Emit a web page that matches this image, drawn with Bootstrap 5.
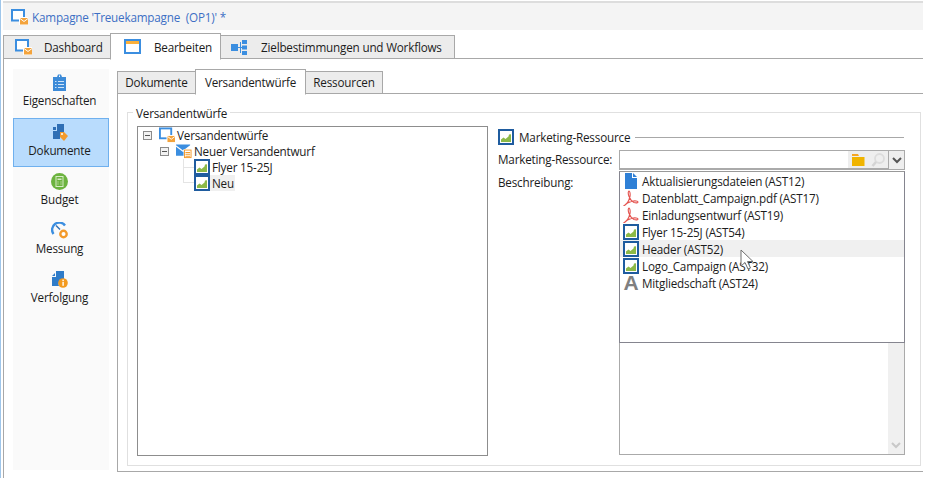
<!DOCTYPE html>
<html lang="de"><head><meta charset="utf-8"><title>Kampagne</title>
<link rel="stylesheet" href="https://cdn.jsdelivr.net/npm/bootstrap@5.3.0/dist/css/bootstrap.min.css">
<style>
html,body{height:478px;overflow:hidden;background:#fff}
body{font:11.7px/16px "Open Sans",sans-serif;color:#1c1c1c;letter-spacing:-.19px}
.shell{position:relative;width:923px;height:478px;border-left:1px solid #9fc6ea;padding:1px 0 0 2px}
.titlebar{height:29px;background:#f4f4f4;border-top:2px solid #ddd;color:#3d6fc4;padding-left:8px;gap:4px}
.outer-tabs,.inner-tabs{border-bottom:1px solid #a8a8a8;flex-wrap:nowrap;--bs-nav-tabs-border-width:0}
.outer-tabs{margin-top:3px;height:26px}
.inner-tabs{height:25px}
.tabx{display:flex;align-items:center;margin-top:auto;background:#ececec;border:1px solid #a8a8a8;border-left-width:0;color:#1c1c1c;text-decoration:none;margin-bottom:-1px}
.outer-tabs .tabx{height:24px}
.inner-tabs .tabx{height:23px;justify-content:center;padding-bottom:1px}
.tabx:first-child{border-left-width:1px}
.tabx.on{background:#fff;border-left-width:1px;border-bottom-color:#fff}
.outer-tabs .tabx.on{height:27px}
.inner-tabs .tabx.on{height:26px}
.t1{width:108px;padding-left:11px;gap:12px}
.t2{width:111px;padding-left:13px;gap:13px;margin-left:-1px}
.t3{width:234px;padding-left:10px;gap:13px}
.i1{width:79px}.i2{width:111px;margin-left:-1px}.i3{width:77px}
.mainrow{border-left:1px solid #a8a8a8;height:419px}
.sidebar{width:96px;margin:10px 0 0 9px;background:#fafafa;height:401px}
.sideitem{height:49px;display:flex;flex-direction:column;align-items:center;color:#1c1c1c;text-decoration:none;padding:5px 3px 0 0;gap:1px;border:1px solid transparent}
.sideitem:first-child{padding-top:4px}
.sideitem.on{background:#b9dcfd;border-color:#6fb0ee}
.sideitem svg{width:17px;height:17px}
.contentcol{width:806px;margin:10px 0 0 8px}
.panebox{border-left:1px solid #a8a8a8;border-bottom:1px solid #a8a8a8;height:378px;padding:11px 2px 0 9px}
.groupbox{border:1px solid #e0e0e0;height:361px;margin:0;padding:0 15px 0 9px}
.groupbox legend{float:none;width:auto;font:inherit;margin:0 0 0 -4px;padding:1px 3px 0;line-height:14px}
.treebox{width:351px;height:330px;border:1px solid #8d8d8d;position:relative;flex:none;margin-top:6px}
.trow{height:16px;display:flex;align-items:center;white-space:nowrap}
.trow svg{width:16px;height:16px;flex:none}
.r1{padding-left:5px}.r2{padding-left:22px}.r3{padding-left:56px}
.tog{width:9px;height:9px;border:1px solid #8b8b8b;background:#f2f2f2;position:relative;margin-right:7px;flex:none}
.tog::after{content:"";position:absolute;left:1px;right:1px;top:3px;height:1px;background:#555}
.lbl{margin-left:2px;padding:0 2px 0 0}
.neu{background:#f0f0f0;width:25px;margin-left:0;padding-left:2px}
.conn1{position:absolute;left:45px;top:32px;width:11px;height:24px;border-left:1px solid #e4e4e4;border-bottom:1px solid #e4e4e4}
.conn2{position:absolute;left:45px;top:40px;width:11px;height:1px;background:#e4e4e4}
.rightcol{margin:-1px 0 0 10px;width:407px}
.sect{height:16px;margin-top:10px;gap:5px}
.sect svg{width:16px;height:16px;flex:none}
.secttext{white-space:nowrap;flex:none}
.rule{height:1px;background:#a8a8a8;flex:1 1 auto;margin-right:1px}
.formrow{display:grid;grid-template-columns:121px 286px;margin-top:5px}
.fl1{height:22px;display:flex;align-items:center;padding-bottom:5px;white-space:nowrap}
.fl2{padding-top:2px}
.picker{height:20px;border:1px solid #aaa;border-bottom-width:2px;display:flex;justify-content:flex-end}
.pk{width:20px;background:#eee;display:flex;align-items:center;justify-content:center}
.pk svg{width:16px;height:16px}
.pkd{width:17px;border:1px solid #aaa;margin:-1px -1px -2px 0;height:20px;background:#eee}
.droplist{height:172px;border:1px solid #85858f;border-top-color:#999;margin-top:1px;padding:0;list-style:none;margin-bottom:0;background:#fff}
.droplist li{height:17px;display:flex;align-items:center;padding-left:3px;gap:3px;white-space:nowrap}
.droplist li svg{width:16px;height:16px;flex:none}
.droplist li.hov{background:#f0f0f0}
.aglyph{width:16px;flex:none;text-align:center;font:700 21px/16px "Liberation Sans",sans-serif;color:#808080;letter-spacing:0}
.descbox{height:112px;border:1px solid #aaa;border-top:0;display:flex;justify-content:flex-end}
.sb{width:16px;background:#f0f0f0;display:flex;align-items:flex-end;justify-content:center;padding-bottom:5px}
.sb svg{width:10px;height:7px}
.cursor{position:absolute;left:739px;top:249px;width:14px;height:22px}
</style></head>
<body>
<svg width="0" height="0" class="position-absolute">
<symbol id="img" viewBox="0 0 16 16"><rect x="1" y="1" width="14" height="14" fill="#fff" stroke="#1f5c9f" stroke-width="2"/><path d="M3 13v-2.500l2.500-2 2 1.500 3-2.500.5-2 2-.2V13z" fill="#8cb947"/></symbol>
<symbol id="camp" viewBox="0 0 17 16"><rect x="1" y="1" width="12" height="10.500" fill="#fff" stroke="#3b8ee0" stroke-width="2"/><rect x="8" y="8" width="9" height="8" fill="#fff"/><rect x="9" y="9" width="8" height="6.500" fill="#f3a33c"/><path d="M9 9.500l4 3 4-3" fill="none" stroke="#fff"/></symbol>
<symbol id="edit" viewBox="0 0 17 15"><rect x="1" y="1" width="15" height="13" fill="#fff" stroke="#3b8ee0" stroke-width="2"/><rect x="2" y="2" width="13" height="3" fill="#fbb03b"/></symbol>
<symbol id="flow" viewBox="0 0 17 15"><rect x="0" y="4" width="7" height="7" fill="#3b8ee0"/><rect x="7" y="7" width="4" height="1" fill="#3b8ee0"/><rect x="9" y="2" width="1" height="11" fill="#3b8ee0"/><path d="M11 0h5v4h-5zM11 5.500h5v4h-5zM11 11h5v4h-5z" fill="#3b8ee0"/></symbol>
<symbol id="clip" viewBox="0 0 17 17"><path d="M2 3h4l1-2.500h3L11 3h4v14H2z" fill="#3d8bd8"/><path d="M8 1.500h1V3H8z" fill="#fff"/><path d="M4 7h1.500v1H4zM7 7h6v1H7zM4 10h1.500v1H4zM7 10h6v1H7zM4 13h1.500v1H4zM7 13h6v1H7z" fill="#cfe4f8"/></symbol>
<symbol id="docs" viewBox="0 0 17 17"><path d="M2 3h3v3H2zM6 0h7v8H9v7H2V7h4z" fill="#2f6fb5"/><path d="M9 8h4l4 4-4 5-4-4z" fill="#f39a2b"/><circle cx="11" cy="10" r="1" fill="#fff"/></symbol>
<symbol id="budget" viewBox="0 0 17 17"><circle cx="8.500" cy="8.500" r="8.500" fill="#6cb33f"/><rect x="5" y="3.500" width="7" height="10" fill="none" stroke="#d7ecc8"/><path d="M6.500 5.500h4v1.500h-4zM6.500 8.500h1v1h-1zM9.500 8.500h1v1h-1zM6.500 10.500h1v1h-1zM9.500 10.500h1v1h-1z" fill="#d7ecc8"/></symbol>
<symbol id="gauge" viewBox="0 0 17 17"><path d="M2.500 12A7 7 0 0 1 14 3.500" fill="none" stroke="#3b8ee0" stroke-width="2.400"/><path d="M5 3.500l4 4" stroke="#2f6fb5" stroke-width="1.500"/><circle cx="12.500" cy="12" r="3.200" fill="#fff" stroke="#f39a2b" stroke-width="2.400"/></symbol>
<symbol id="track" viewBox="0 0 17 17"><path d="M1 5l3-3v3zM5 0h8v8a5 5 0 0 0-5 7H1V6h4z" fill="#2f7cc9"/><circle cx="12" cy="12" r="4.800" fill="#f39a1f"/><rect x="11.400" y="10.800" width="1.400" height="4" fill="#fff"/><rect x="11.400" y="8.600" width="1.400" height="1.400" fill="#fff"/></symbol>
<symbol id="mail" viewBox="0 0 17 16"><path d="M0 1h15v1L7.500 7.500 0 2z" fill="#3b8ee0"/><path d="M0 3.500l7.500 5.500 1-.7V13H0z" fill="#3b8ee0"/><rect x="8" y="6" width="9" height="10" fill="#fff"/><rect x="9" y="7" width="7" height="8" fill="none" stroke="#f39a2b"/><path d="M10 9h5v1h-5zM10 11h5v1h-5zM10 13h5v1h-5z" fill="#f39a2b"/></symbol>
<symbol id="doc" viewBox="0 0 16 16"><path d="M2 0h7v5h5v11H2zM10 0l4 4h-4z" fill="#2f80d6"/></symbol>
<symbol id="pdf" viewBox="0 0 16 16"><path d="M1 15.500c3-1 5-5 6-9C7.500 3.500 6.700 1 6 1S4.700 3 6 6.500c1 2.500 3 5 5 6 2 .6 4 .5 4-.5s-3-1.500-6-.8c-3 .7-6 2-8 4.800z" fill="none" stroke="#e4534f" stroke-width="1.100"/></symbol>
<symbol id="folder" viewBox="0 0 16 16"><path d="M2 2h6l1 2H2z" fill="#f5a623"/><rect x="2" y="5" width="12.500" height="9" fill="#f0b400"/></symbol>
<symbol id="loupe" viewBox="0 0 16 16"><circle cx="9.500" cy="6.500" r="4.500" fill="none" stroke="#dcdcdc" stroke-width="1.800"/><path d="M6 10l-3.500 4" stroke="#d4d4d4" stroke-width="2.600"/></symbol>
</svg>

<div class="shell">
 <div class="titlebar d-flex align-items-center"><svg width="17" height="16"><use href="#camp"/></svg><span>Kampagne 'Treuekampagne&nbsp; (OP1)' *</span></div>

 <nav class="nav nav-tabs outer-tabs">
  <a class="tabx t1" href="#"><svg width="17" height="16"><use href="#camp"/></svg>Dashboard</a>
  <a class="tabx t2 on" href="#"><svg width="17" height="15"><use href="#edit"/></svg>Bearbeiten</a>
  <a class="tabx t3" href="#"><svg width="17" height="15"><use href="#flow"/></svg>Zielbestimmungen und Workflows</a>
 </nav>

 <div class="mainrow d-flex">
  <div class="sidebar nav flex-column flex-nowrap">
   <a class="sideitem" href="#"><svg><use href="#clip"/></svg>Eigenschaften</a>
   <a class="sideitem on" href="#"><svg><use href="#docs"/></svg>Dokumente</a>
   <a class="sideitem" href="#"><svg><use href="#budget"/></svg>Budget</a>
   <a class="sideitem" href="#"><svg><use href="#gauge"/></svg>Messung</a>
   <a class="sideitem" href="#"><svg><use href="#track"/></svg>Verfolgung</a>
  </div>
  <div class="contentcol">
   <nav class="nav nav-tabs inner-tabs">
    <a class="tabx i1" href="#">Dokumente</a>
    <a class="tabx i2 on" href="#">Versandentwürfe</a>
    <a class="tabx i3" href="#">Ressourcen</a>
   </nav>
   <div class="panebox">
    <fieldset class="groupbox">
     <legend>Versandentwürfe</legend>
     <div class="d-flex">
      <div class="treebox">
       <div class="trow r1"><span class="tog"></span><svg><use href="#camp"/></svg><span class="lbl">Versandentwürfe</span></div>
       <div class="trow r2"><span class="tog"></span><svg><use href="#mail"/></svg><span class="lbl">Neuer Versandentwurf</span></div>
       <div class="trow r3"><svg><use href="#img"/></svg><span class="lbl">Flyer 15-25J</span></div>
       <div class="trow r3"><svg><use href="#img"/></svg><span class="lbl neu">Neu</span></div>
       <span class="conn1"></span><span class="conn2"></span>
      </div>
      <div class="rightcol">
       <div class="sect d-flex align-items-center"><svg><use href="#img"/></svg><span class="secttext">Marketing-Ressource</span><span class="rule"></span></div>
       <div class="formrow">
        <div>
         <div class="fl1">Marketing-Ressource:</div>
         <div class="fl2">Beschreibung:</div>
        </div>
        <div>
         <div class="picker">
          <span class="pk"><svg><use href="#folder"/></svg></span>
          <span class="pk"><svg><use href="#loupe"/></svg></span>
          <button class="pkd btn p-0 rounded-0 d-flex align-items-center justify-content-center" type="button" aria-label="Öffnen"><svg width="10" height="7" viewBox="0 0 10 7"><path d="M1 1l4 4 4-4" fill="none" stroke="#555" stroke-width="2"/></svg></button>
         </div>
         <ul class="droplist">
          <li><svg><use href="#doc"/></svg>Aktualisierungsdateien (AST12)</li>
          <li><svg><use href="#pdf"/></svg>Datenblatt_Campaign.pdf (AST17)</li>
          <li><svg><use href="#pdf"/></svg>Einladungsentwurf (AST19)</li>
          <li><svg><use href="#img"/></svg>Flyer 15-25J (AST54)</li>
          <li class="hov"><svg><use href="#img"/></svg>Header (AST52)</li>
          <li><svg><use href="#img"/></svg>Logo_Campaign (AST32)</li>
          <li><span class="aglyph">A</span>Mitgliedschaft (AST24)</li>
         </ul>
         <div class="descbox"><div class="sb"><svg viewBox="0 0 10 7"><path d="M1 1l4 4 4-4" fill="none" stroke="#c8c8c8" stroke-width="2"/></svg></div></div>
        </div>
       </div>
      </div>
     </div>
    </fieldset>
   </div>
  </div>
 </div>
 <svg class="cursor" viewBox="0 0 14 22"><path d="M1 1v16l4-3.500 3 6.500 2.500-1-3-6.500h5.500z" fill="#fff" stroke="#6e6e6e"/></svg>
</div>
<script src="https://cdn.jsdelivr.net/npm/bootstrap@5.3.0/dist/js/bootstrap.bundle.min.js"></script>
</body></html>
